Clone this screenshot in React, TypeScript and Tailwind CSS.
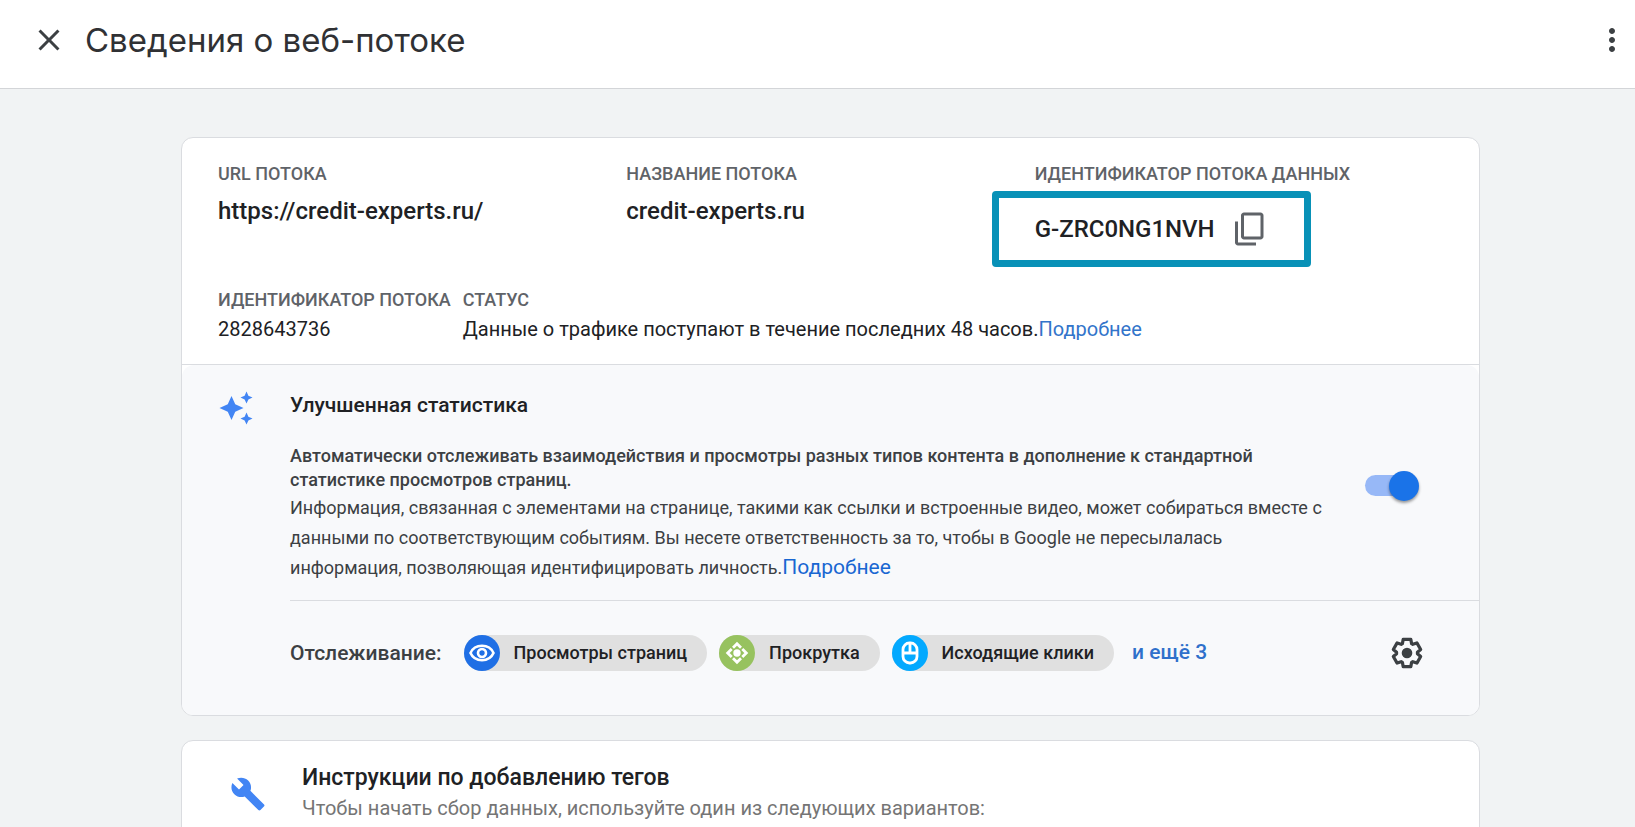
import { useState } from "react";
import type { ReactNode } from "react";
import { MdAutoAwesome, MdBuild, MdClose, MdContentCopy, MdMoreVert } from "react-icons/md";

// Six-tooth outline, one tooth every 60 degrees
const GEAR_POINTS = Array.from({ length: 6 }, (_, i) => {
  const a = (i * Math.PI) / 3;
  return [
    [-4.6, -9.4],
    [-3.8, -13.6],
    [3.8, -13.6],
    [4.6, -9.4],
  ]
    .map(([x, y]) => {
      const px = x * Math.cos(a) - y * Math.sin(a);
      const py = x * Math.sin(a) + y * Math.cos(a);
      return `${px.toFixed(2)},${py.toFixed(2)}`;
    })
    .join(" ");
}).join(" ");

function GearIcon() {
  return (
    <svg viewBox="-18 -18 36 36" className="w-9 h-9" aria-hidden="true">
      <polygon points={GEAR_POINTS} fill="none" stroke="currentColor" strokeWidth="3.2" strokeLinejoin="round" />
      <circle r="5.3" fill="currentColor" />
    </svg>
  );
}

function EyeIcon() {
  return (
    <svg viewBox="-18 -18 36 36" className="w-9 h-9" fill="none" stroke="white" aria-hidden="true">
      <path d="M-11.5 0C-9.5 -4.5 -5 -7.2 0 -7.2S9.5 -4.5 11.5 0C9.5 4.5 5 7.2 0 7.2S-9.5 4.5 -11.5 0Z" strokeWidth="2.6" />
      <circle r="4" strokeWidth="2.6" />
    </svg>
  );
}

function ScrollIcon() {
  return (
    <svg viewBox="-18 -18 36 36" className="w-9 h-9" fill="none" stroke="white" strokeWidth="2.8" aria-hidden="true">
      <path d="M-4 -5.3 0 -9.3 4 -5.3M-4 5.3 0 9.3 4 5.3M-5.3 -4 -9.3 0 -5.3 4M5.3 -4 9.3 0 5.3 4" />
      <circle r="3.7" fill="white" stroke="none" />
    </svg>
  );
}

function MouseIcon() {
  return (
    <svg viewBox="-18 -18 36 36" className="w-9 h-9" fill="none" stroke="white" strokeWidth="2.8" aria-hidden="true">
      <rect x="-7" y="-10" width="14" height="20" rx="6.5" />
      <path d="M-7 0H7M0 -10V0" />
    </svg>
  );
}

const CHIPS = [
  { label: "Просмотры страниц", color: "bg-[#1f6fe5]", icon: <EyeIcon /> },
  { label: "Прокрутка", color: "bg-[#97c25f]", icon: <ScrollIcon /> },
  { label: "Исходящие клики", color: "bg-[#03a9ff]", icon: <MouseIcon /> },
];

function Label({ children }: { children: ReactNode }) {
  return <dt className="text-lg leading-6 font-medium text-[#5f6368] whitespace-nowrap">{children}</dt>;
}

export default function App() {
  const [enabled, setEnabled] = useState(true);

  return (
    <div className="min-h-screen bg-[#f1f3f4] font-[Roboto,sans-serif] text-[#202124]">
      <header className="flex items-center h-[89px] pb-2 pl-[31px] pr-[5px] bg-white border-b border-[#d3d5d8]">
        <button type="button" aria-label="Закрыть" className="text-[#3c4043]">
          <MdClose className="w-9 h-9" />
        </button>
        <h1 className="ml-[18px] text-[33px] leading-10 font-[Inter,sans-serif] text-[#303134]">Сведения о веб-потоке</h1>
        <button type="button" aria-label="Ещё" className="ml-auto text-[#3c4043]">
          <MdMoreVert className="w-9 h-9" />
        </button>
      </header>

      <main className="flex flex-col gap-6 pt-12 pl-[181px] pr-[155px]">
        <section className="bg-white border border-[#dadce0] rounded-xl overflow-hidden">
          <dl className="grid grid-cols-3 px-9 pt-6">
            <div>
              <Label>URL ПОТОКА</Label>
              <dd className="mt-[11px] text-2xl leading-7 font-medium">https://credit-experts.ru/</dd>
            </div>
            <div>
              <Label>НАЗВАНИЕ ПОТОКА</Label>
              <dd className="mt-[11px] text-2xl leading-7 font-medium">credit-experts.ru</dd>
            </div>
            <div>
              <Label>ИДЕНТИФИКАТОР ПОТОКА ДАННЫХ</Label>
              <dd className="relative flex items-center gap-[17px] mt-[25px] w-fit text-2xl leading-9 font-medium">
                G-ZRC0NG1NVH
                <button type="button" aria-label="Копировать" className="text-[#5f6368]">
                  {/* back sheet sits at the bottom left */}
                  <MdContentCopy className="w-9 h-9 -scale-y-100" />
                </button>
                <span className="absolute -inset-x-[43px] -inset-y-5 border-[7px] border-[#0891b7] rounded pointer-events-none" />
              </dd>
            </div>
          </dl>

          <dl className="flex gap-3 px-9 pt-[41px] pb-[21px]">
            <div>
              <Label>ИДЕНТИФИКАТОР ПОТОКА</Label>
              <dd className="mt-[3px] text-xl leading-7">2828643736</dd>
            </div>
            <div>
              <Label>СТАТУС</Label>
              <dd className="mt-[3px] text-xl leading-7">
                Данные о трафике поступают в течение последних 48 часов.
                <a href="#" className="text-[#3274ca]">Подробнее</a>
              </dd>
            </div>
          </dl>

          <div className="border-t border-[#dadce0]">
            <div className="flex bg-[#f8f9fb] rounded-t-xl">
              <MdAutoAwesome className="shrink-0 w-9 h-9 mt-[25px] ml-9 text-[#4285f4]" />
              <div className="flex-1 ml-9">
                <div className="flex items-center">
                  <div className="flex-1 pt-6 pb-[17px]">
                    <h2 className="text-[21px] leading-8 font-medium">Улучшенная статистика</h2>
                    <p className="mt-[23px] text-lg leading-6 font-medium text-[#3c4043]">
                      Автоматически отслеживать взаимодействия и просмотры разных типов контента в дополнение к стандартной
                      <br />
                      статистике просмотров страниц.
                    </p>
                    <p className="mt-px text-lg leading-[30px] text-[#3c4043]">
                      Информация, связанная с элементами на странице, такими как ссылки и встроенные видео, может собираться вместе с
                      <br />
                      данными по соответствующим событиям. Вы несете ответственность за то, чтобы в Google не пересылалась
                      <br />
                      информация, позволяющая идентифицировать личность.
                      <a href="#" className="text-[21px] leading-7 text-[#1967d2]">Подробнее</a>
                    </p>
                  </div>
                  <label className="relative flex shrink-0 items-center mt-1.5 mr-[60px] w-[54px] h-[30px]">
                    <input
                      type="checkbox"
                      role="switch"
                      aria-label="Улучшенная статистика"
                      checked={enabled}
                      onChange={(e) => setEnabled(e.target.checked)}
                      className="peer sr-only"
                    />
                    <span className="w-12 h-[21px] rounded-full bg-[#bdc1c6] peer-checked:bg-[#97b8f7]" />
                    <span className="absolute left-0 w-[30px] h-[30px] rounded-full bg-white shadow-[0_2px_3px_rgba(0,0,0,0.4)] peer-checked:left-6 peer-checked:bg-[#1a73e8]" />
                  </label>
                </div>

                <div className="flex items-center gap-[18px] border-t border-[#dadce0] pt-[34px] pb-11 pr-[54px]">
                  <span className="mr-1 text-[21px] leading-9 font-medium text-[#3c4043]">Отслеживание:</span>
                  <ul className="flex gap-3">
                    {CHIPS.map((chip) => (
                      <li key={chip.label} className="flex items-center gap-3.5 h-9 pr-5 rounded-full bg-[#e0e0e0] text-lg font-medium">
                        <span className={`rounded-full ${chip.color}`}>{chip.icon}</span>
                        {chip.label}
                      </li>
                    ))}
                  </ul>
                  <a href="#" className="text-[21px] font-medium text-[#2f70cb]">и ещё 3</a>
                  <button type="button" aria-label="Настройки" className="ml-auto text-[#3c4043]">
                    <GearIcon />
                  </button>
                </div>
              </div>
            </div>
          </div>
        </section>

        <section className="flex items-center gap-9 px-12 pt-[21px] pb-6 bg-white border border-[#dadce0] rounded-xl">
          <MdBuild className="mt-1 w-9 h-9 text-[#4285f4]" />
          <div>
            <h2 className="text-[23px] leading-8 font-medium">Инструкции по добавлению тегов</h2>
            <p className="text-xl leading-7 text-[#757575]">Чтобы начать сбор данных, используйте один из следующих вариантов:</p>
          </div>
        </section>
      </main>
    </div>
  );
}
